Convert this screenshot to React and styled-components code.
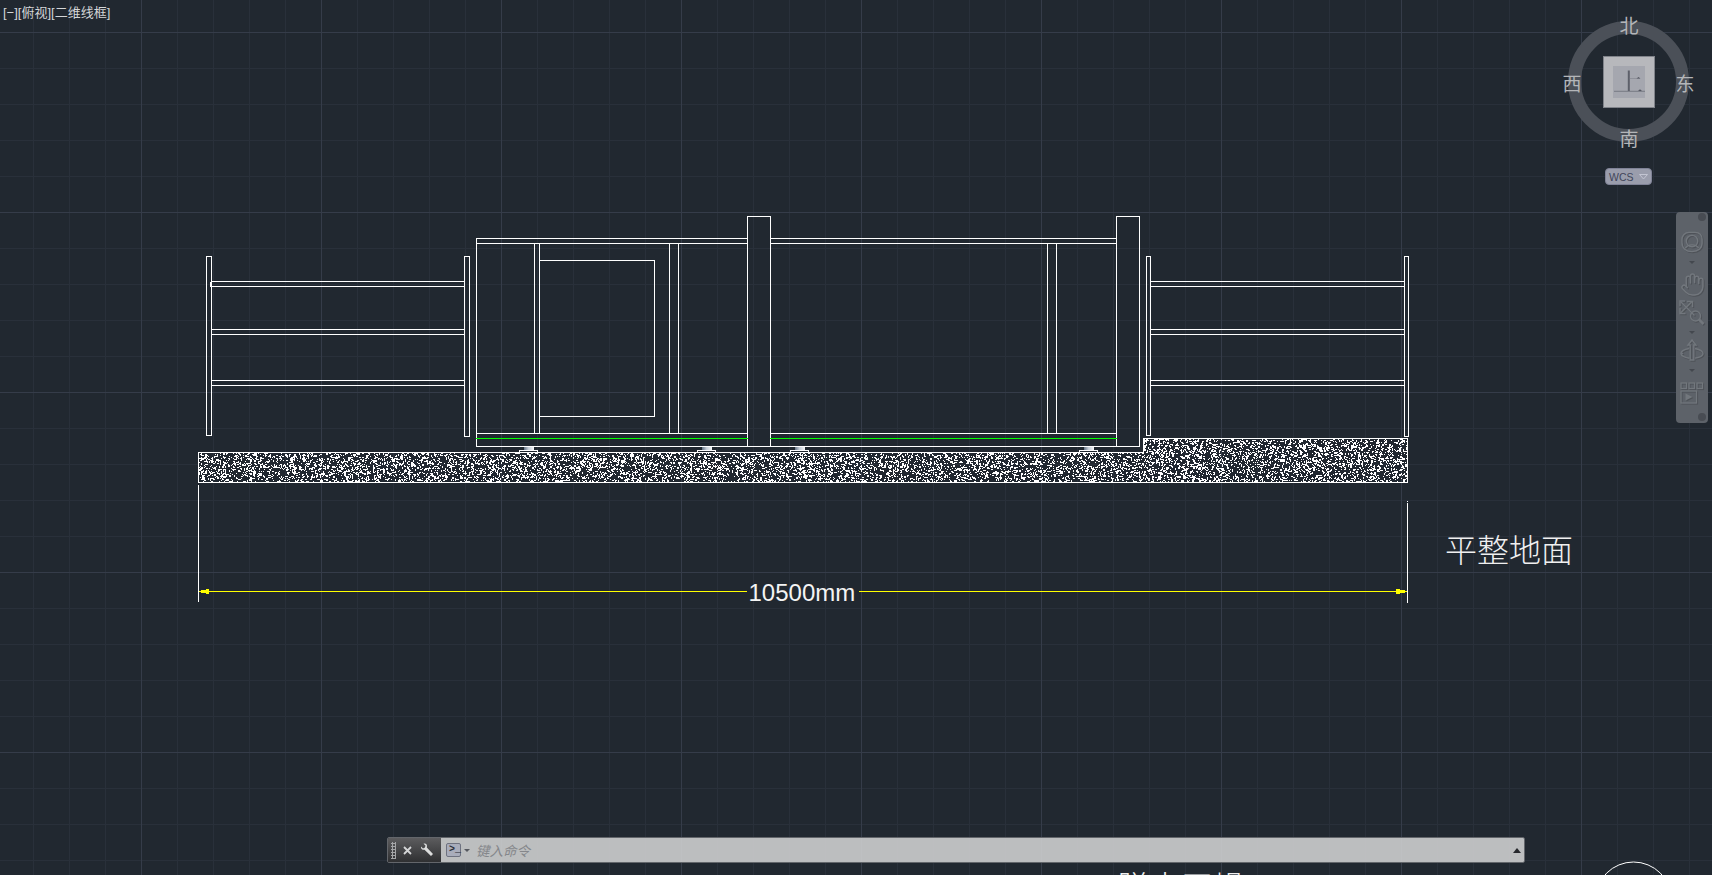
import React, { useMemo } from 'react'
import styled, { createGlobalStyle } from 'styled-components'
import { Hand } from 'lucide-react'

const CJK = `"Liberation Sans", "Noto Sans CJK SC", sans-serif`

const GlobalStyle = createGlobalStyle`
  html, body {
    margin: 0;
    padding: 0;
    height: 100%;
    background: #212830;
    overflow: hidden;
  }
  #root { height: 100%; }
`

const Viewport = styled.div`
  position: relative;
  width: 1712px;
  height: 875px;
  overflow: hidden;
  background-color: #212830;
  background-image:
    linear-gradient(to right, #353c49 1px, transparent 1px),
    linear-gradient(to bottom, #353c49 1px, transparent 1px),
    linear-gradient(to right, #29303a 1px, transparent 1px),
    linear-gradient(to bottom, #29303a 1px, transparent 1px);
  background-size: 180px 180px, 180px 180px, 36px 36px, 36px 36px;
  background-position: 141px 0, 0 32px, 33px 0, 0 32px;
`

const DrawingCanvas = styled.svg`
  position: absolute;
  inset: 0;
`

const DimText = styled.text`
  font-family: "Liberation Sans", Arial, sans-serif;
  font-size: 24px;
  fill: #f4f4f4;
`

const NoteText = styled.text`
  font-family: "Noto Sans CJK SC", sans-serif;
  font-weight: 300;
  font-size: 32px;
  fill: #f0f0f0;
`

const ViewLabel = styled.div`
  position: absolute;
  left: 3px;
  top: 5px;
  font-family: ${CJK};
  font-size: 13px;
  line-height: 16px;
  color: #d4d6d8;
  white-space: nowrap;
`

const Compass = styled.div`
  position: absolute;
  left: 1559px;
  top: 12px;
  width: 140px;
  height: 176px;
`

const Ring = styled.div`
  position: absolute;
  left: 9px;
  top: 9px;
  width: 121px;
  height: 121px;
  box-sizing: border-box;
  border: 13px solid #4b5058;
  border-radius: 50%;
`

const CubeFace = styled.div`
  position: absolute;
  left: 44px;
  top: 44px;
  width: 52px;
  height: 52px;
  box-sizing: border-box;
  display: flex;
  align-items: center;
  justify-content: center;
  background: #b7b8bc;
  border: 1px solid #80838a;
`

const CompassMark = styled.span`
  position: absolute;
  left: ${p => p.$x}px;
  top: ${p => p.$y}px;
  width: 20px;
  height: 20px;
  font-family: "Noto Sans CJK SC", sans-serif;
  font-size: 19px;
  line-height: 20px;
  text-align: center;
  color: #b4b6b9;
`

const WcsButton = styled.div`
  position: absolute;
  left: 46px;
  top: 156px;
  width: 47px;
  height: 17px;
  box-sizing: border-box;
  display: flex;
  align-items: center;
  gap: 5px;
  padding-left: 3px;
  background: #9a9dac;
  border: 1px solid #7f8296;
  border-radius: 4px;
  font-family: "Liberation Sans", Arial, sans-serif;
  font-size: 10.5px;
  color: #41465a;
`

const NavBar = styled.div`
  position: absolute;
  left: 1676px;
  top: 212px;
  width: 32px;
  height: 211px;
  box-sizing: border-box;
  padding-top: 9px;
  display: flex;
  flex-direction: column;
  align-items: center;
  background: #5d6269;
  border-radius: 4px;
  color: #72777d;
`

const NavCorner = styled.div`
  align-self: flex-end;
  width: 8px;
  height: 8px;
  margin: ${p => p.$margin};
  border-radius: 50%;
  background: #484c53;
`

const NavIcon = styled.svg`
  display: block;
  flex: none;
  margin-top: ${p => p.$top || 0}px;
  filter: drop-shadow(1px 1px 0 #4e5258);
`

const NavCaret = styled.div`
  flex: none;
  width: 0;
  height: 0;
  margin-top: ${p => p.$top || 0}px;
  border-left: 3px solid transparent;
  border-right: 3px solid transparent;
  border-top: 3px solid #44484f;
`

const HandIcon = styled(Hand)`
  display: block;
  flex: none;
  margin-top: 8px;
  filter: drop-shadow(1px 1px 0 #4e5258);
`

const CommandLine = styled.div`
  position: absolute;
  left: 387px;
  top: 837px;
  width: 1138px;
  height: 26px;
  box-sizing: border-box;
  display: flex;
  border: 1px solid #63666b;
  border-radius: 2px;
  overflow: hidden;
`

const CommandTools = styled.div`
  flex: none;
  width: 53px;
  display: flex;
  align-items: center;
  padding-left: 3px;
  box-sizing: border-box;
  background: linear-gradient(to bottom, #5c5c5e, #2f3032);
`

const Grip = styled.div`
  flex: none;
  width: 5px;
  height: 17px;
  background-image: radial-gradient(circle, #a5a6a8 1px, transparent 1.2px);
  background-size: 3px 3px;
`

const CloseGlyph = styled.svg`
  flex: none;
  margin-left: 7px;
`

const WrenchGlyph = styled.svg`
  flex: none;
  margin-left: 8px;
`

const CommandInput = styled.div`
  flex: 1;
  display: flex;
  align-items: center;
  padding: 0 3px 0 5px;
  background: rgba(205, 206, 207, 0.9);
`

const PromptIcon = styled.div`
  flex: none;
  width: 15px;
  height: 14px;
  box-sizing: border-box;
  padding-left: 2px;
  background: #a9adbb;
  border: 1px solid #6e7280;
  border-radius: 2px;
  font-family: "Liberation Mono", monospace;
  font-size: 10px;
  line-height: 12px;
  font-weight: 700;
  color: #2d3039;
`

const PromptCaret = styled.div`
  flex: none;
  margin-left: 3px;
  border-left: 3px solid transparent;
  border-right: 3px solid transparent;
  border-top: 3px solid #55585f;
`

const Placeholder = styled.span`
  flex: 1;
  margin-left: 6px;
  font-family: "Noto Sans CJK SC", sans-serif;
  font-size: 13.5px;
  font-style: italic;
  color: #85878b;
`

const HistoryCaret = styled.div`
  flex: none;
  border-left: 4px solid transparent;
  border-right: 4px solid transparent;
  border-bottom: 5px solid #26282c;
`

// every rectangle of the machine, in screen pixels
const posts = [
  [206.5, 256.5, 5, 179],
  [464.5, 256.5, 5, 180],
  [747.5, 216.5, 23, 230],
  [1116.5, 216.5, 23, 230],
  [1146.5, 256.5, 4, 179],
  [1404.5, 256.5, 4, 180],
]

const railRows = [281.5, 286.5, 329.5, 334.5, 380.5, 385.5]
const feet = [523.5, 701.5, 794.5, 1083.5]

function hatchPath() {
  let seed = 20231
  const rand = () => {
    seed = (seed * 1664525 + 1013904223) >>> 0
    return seed / 4294967296
  }
  let d = ''
  for (let y = 439; y < 482; y++) {
    const startX = y < 453 ? 1144 : 199
    for (let x = startX; x < 1407; x++) {
      const r = rand()
      if (r < 0.13) d += `M${x} ${y}h1v1h-1z`
      else if (r < 0.18) d += `M${x} ${y}h2v1h-2z`
      else if (r < 0.215) d += `M${x} ${y}h1v2h-1z`
      else if (r < 0.23) d += `M${x} ${y}h2v2h-2z`
    }
  }
  return d
}

const Machine = () => {
  const hatch = useMemo(hatchPath, [])
  return (
    <DrawingCanvas width="1712" height="875" shapeRendering="crispEdges">
      <g fill="none" stroke="#ffffff" strokeWidth="1">
        {posts.map(([x, y, w, h]) => (
          <rect key={x} x={x} y={y} width={w} height={h} />
        ))}
        {railRows.map(y => (
          <React.Fragment key={y}>
            <path d={`M${y < 290 ? 210.5 : 211.5} ${y}H464.5`} />
            <path d={`M1150.5 ${y}H1404.5`} />
          </React.Fragment>
        ))}
        <path d="M210.5 281.5V286.5" />

        {/* main frame */}
        <path d="M476.5 446.5V238.5H747.5M476.5 243.5H747.5M770.5 238.5H1116.5M770.5 243.5H1116.5" />
        <path d="M476.5 433.5H747.5M770.5 433.5H1116.5M476.5 446.5H747.5M770.5 446.5H1116.5" />
        <path d="M534.5 243.5V433.5M539.5 243.5V433.5M669.5 243.5V433.5M678.5 243.5V433.5M1047.5 243.5V433.5M1056.5 243.5V433.5" />
        <path d="M539.5 260.5H654.5V416.5H539.5" />

        {/* ground slab */}
        <path d="M198.5 452.5H1143.5V438.5H1407.5V482.5H198.5Z" />

        {/* extension lines */}
        <path d="M198.5 485V602M1407.5 503V603M1407.5 501V502" />
      </g>

      <path d="M476 438.5H748M770 438.5H1117" stroke="#00ff00" fill="none" />
      <path d={hatch} fill="#ffffff" />

      {feet.map(x => (
        <g key={x}>
          <defs>
            <linearGradient id={`foot${x}`}>
              <stop offset="0" stopColor="#5a6a7c" />
              <stop offset="0.5" stopColor="#c4ccd6" />
              <stop offset="1" stopColor="#f0f2f4" />
            </linearGradient>
          </defs>
          <rect x={x} y={447} width="10" height="3" fill={`url(#foot${x})`} />
          <path d={`M${x - 4} 452.5V450.5H${x + 14}V452.5`} fill="none" stroke="#ffffff" />
        </g>
      ))}

      {/* dimension */}
      <path d="M199 591.5H747M859 591.5H1407" stroke="#ffff00" fill="none" />
      <path d="M201 590H206V589H209V594H206V593H201Z" fill="#ffff00" />
      <path d="M1405 590H1400V589H1396V594H1400V593H1405Z" fill="#ffff00" />
      <DimText x="748.500" y="600.5">10500mm</DimText>

      <NoteText x="1445" y="562">平整地面</NoteText>
      <NoteText x="1117" y="899">脱水干燥</NoteText>

      <circle cx="1633.5" cy="900" r="38" fill="none" stroke="#ffffff" shapeRendering="auto" />
    </DrawingCanvas>
  )
}

const ViewCube = () => (
  <Compass>
    <Ring />
    <CubeFace>
      <svg width="32" height="32" viewBox="0 0 32 32">
        <rect width="32" height="32" fill="#a5a7af" />
        <path d="M14.8 4.5h2v20.500h-2z" fill="#5d606a" />
        <path d="M1 25.300H32" stroke="#6b6e78" strokeWidth="0.8" />
        <path d="M16.800 12.500H27" stroke="#80838c" strokeWidth="0.6" />
        <path d="M23.500 12.500l2-1.500 2 1.500zM25 25l2-1.800 2 1.800z" fill="#555862" />
      </svg>
    </CubeFace>
    <CompassMark $x={60} $y={3}>北</CompassMark>
    <CompassMark $x={60} $y={116}>南</CompassMark>
    <CompassMark $x={3} $y={61}>西</CompassMark>
    <CompassMark $x={116} $y={61}>东</CompassMark>
    <WcsButton>
      WCS
      <svg width="9" height="6" viewBox="0 0 9 6">
        <path d="M0.500 0.500H8.500L4.500 5Z" fill="none" stroke="#c3c5d2" />
      </svg>
    </WcsButton>
  </Compass>
)

const NavigationBar = () => (
  <NavBar>
    <NavCorner $margin="-8px 2px 0 0" />
    <NavIcon $top={10} width="24" height="22" viewBox="0 0 24 23" fill="none" stroke="currentColor" strokeWidth="1.400">
      <path d="M9 1.500h6c5 0 7.500 3 7.500 7.500v4c0 5-4 8.500-10.500 8.500S1.500 18 1.500 12V9c0-4.500 3-7.500 7.500-7.500z" />
      <circle cx="12" cy="10.500" r="6" />
      <path d="M5 18c2-3 4-3.500 7-3.500s5 .5 7 3.500" />
    </NavIcon>
    <NavCaret $top={8} />
    <HandIcon size={25} strokeWidth={1.400} />
    <NavIcon $top={3} width="26" height="25" viewBox="0 0 26 25" fill="none" stroke="currentColor" strokeWidth="1.400">
      <path d="M1.500 1.500l14 14M13 1.500L1.500 13" />
      <path d="M1 6V1h5M8 1.500h5.500V7M1 8v5.500h5.500" />
      <circle cx="16.500" cy="16" r="5" />
      <path d="M20 19.500l4.500 4.500" strokeWidth="2.600" />
    </NavIcon>
    <NavCaret $top={6} />
    <NavIcon $top={5} width="24" height="23" viewBox="0 0 24 23" fill="none" stroke="currentColor" strokeWidth="1.400">
      <path d="M12 1l4 5h-2.200v15h-3.600V6H8z" />
      <path d="M9 9.500C4 10.500 1 12.500 1 14.500c0 2.500 4.500 4.500 8.500 4.800M15 9.500c4.500 1 8 3 8 5 0 2.500-4 4-8 4.600" />
      <path d="M3 14l-2 1.500" />
    </NavIcon>
    <NavCaret $top={7} />
    <NavIcon $top={10} width="24" height="22" viewBox="0 0 24 22" fill="none" stroke="currentColor" strokeWidth="1.200">
      <rect x="1" y="1" width="5.500" height="5.500" />
      <rect x="9" y="1" width="5.500" height="5.500" />
      <rect x="17" y="1" width="5.500" height="5.500" />
      <rect x="1" y="9" width="15.500" height="12" />
      <path d="M5.500 11.500l7 3.500-7 3.500z" fill="currentColor" stroke="none" />
    </NavIcon>
    <NavCorner $margin="9px 2px 0 0" />
  </NavBar>
)

const CommandBar = () => (
  <CommandLine>
    <CommandTools>
      <Grip />
      <CloseGlyph width="9" height="9" viewBox="0 0 9 9">
        <path d="M1 1l7 7M8 1l-7 7" stroke="#d4d5d6" strokeWidth="1.800" />
      </CloseGlyph>
      <WrenchGlyph width="14" height="14" viewBox="0 0 14 14">
        <path d="M1 3.500L3 5.500 5 4.500 5.500 2.500 3.500.800C5.500 0 7 1 7 3L6.800 4.500 13 11 11 13 4.500 6.800C2.500 7 .500 6 1 3.500Z" fill="#dcdddd" />
      </WrenchGlyph>
    </CommandTools>
    <CommandInput>
      <PromptIcon>{'>_'}</PromptIcon>
      <PromptCaret />
      <Placeholder>键入命令</Placeholder>
      <HistoryCaret />
    </CommandInput>
  </CommandLine>
)

const App = () => (
  <>
    <GlobalStyle />
    <Viewport>
      <Machine />
      <ViewLabel>[−][俯视][二维线框]</ViewLabel>
      <ViewCube />
      <NavigationBar />
      <CommandBar />
    </Viewport>
  </>
)

export default App
